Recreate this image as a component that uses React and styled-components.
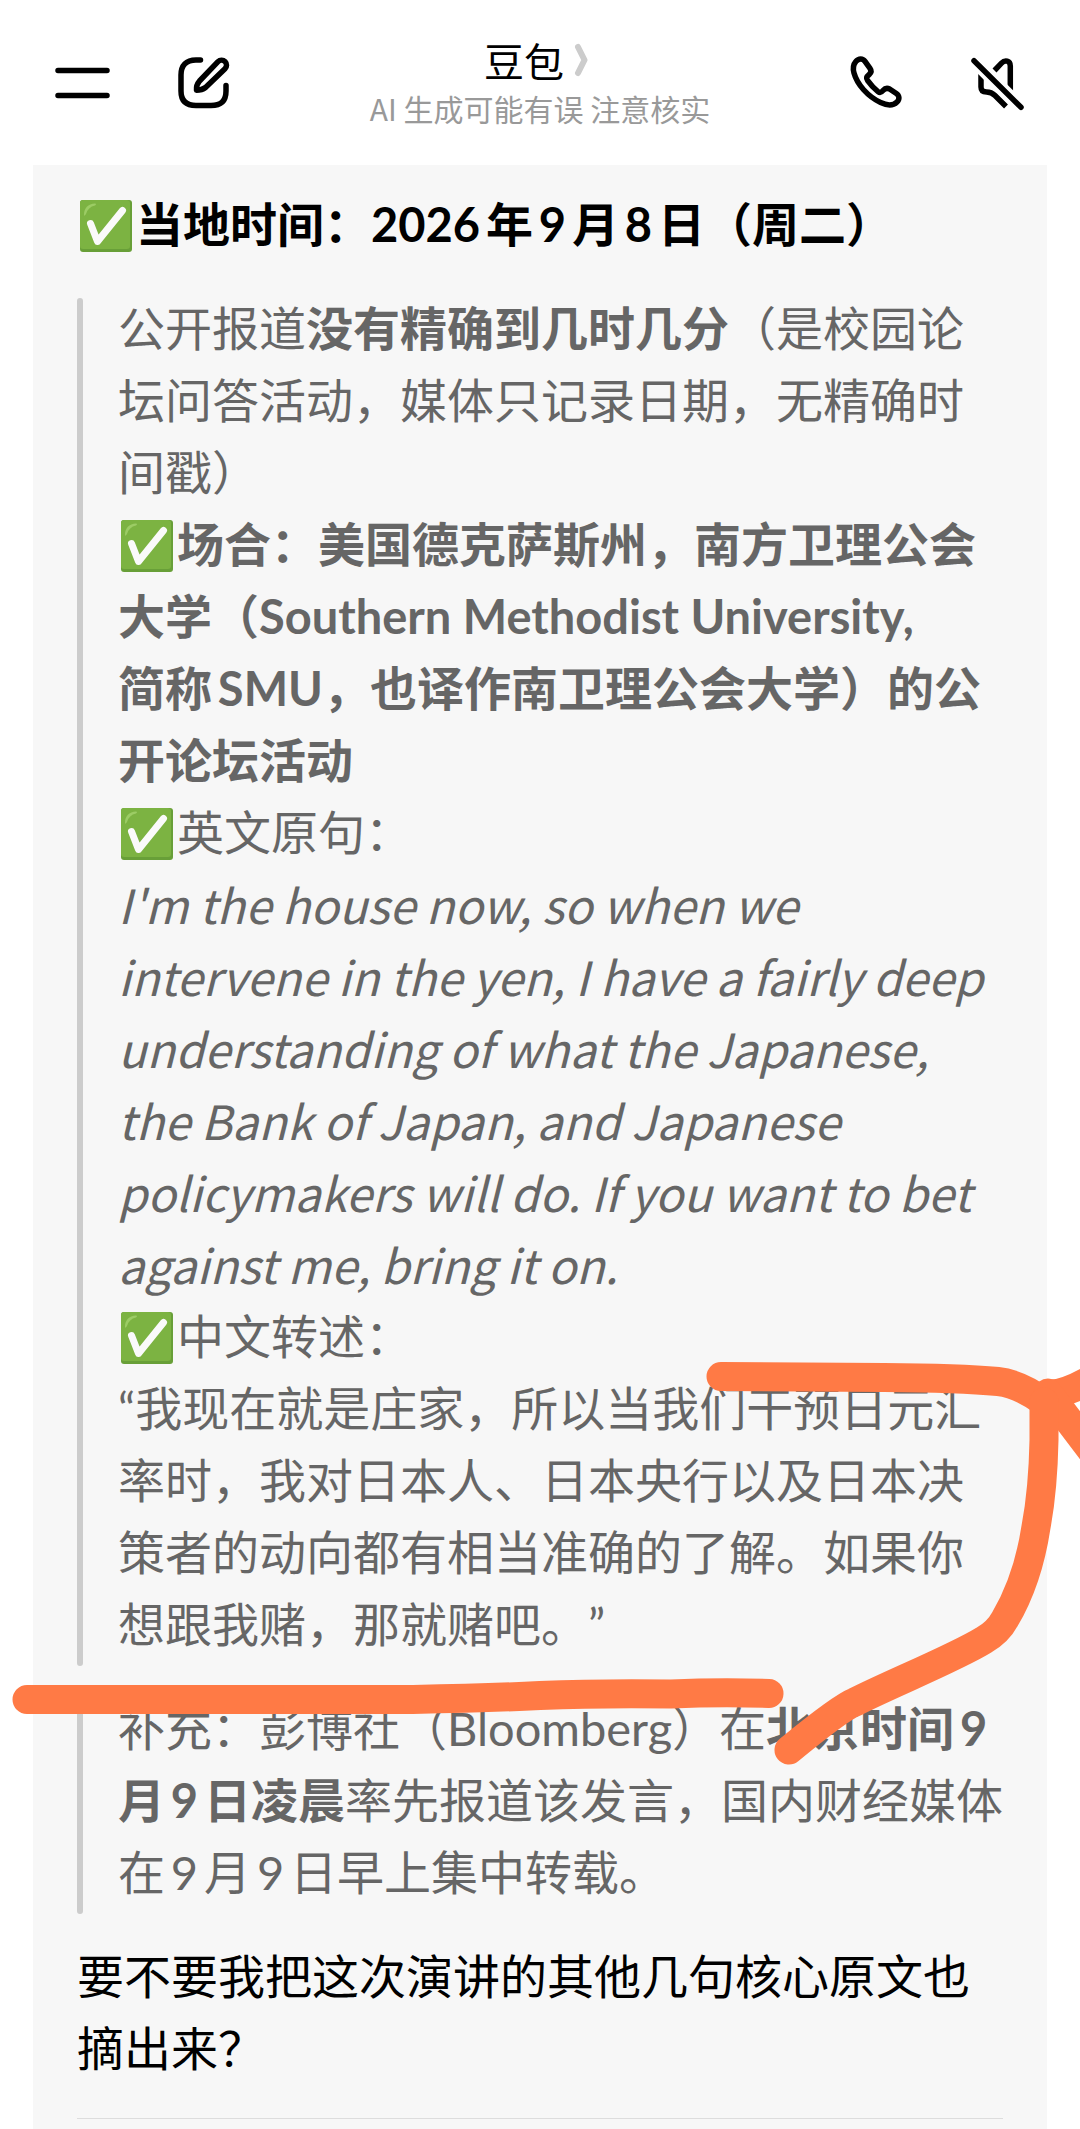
import React from "react";
import styled, { createGlobalStyle } from "styled-components";

const GlobalStyle = createGlobalStyle`
  body {
    margin: 0;
    background: #ffffff;
    color: #000000;
    font-family: "Noto Sans CJK SC", sans-serif;
    text-spacing-trim: space-all;
  }
`;

const Page = styled.div`
  position: relative;
  overflow: hidden;
`;

const Header = styled.header`
  display: flex;
  align-items: center;
  justify-content: space-between;
  min-height: 112px;
  padding: 27px 54px 26px;
`;

const Actions = styled.div`
  display: flex;
  gap: 65px;
`;

const IconButton = styled.button`
  width: 56px;
  height: 56px;
  padding: 0;
  border: none;
  background: transparent;
  color: inherit;
  cursor: pointer;

  svg {
    display: block;
    fill: none;
    stroke: currentColor;
    stroke-width: 5.5;
    stroke-linejoin: round;
  }
`;

const Heading = styled.div`
  display: flex;
  flex-direction: column;
  align-items: center;
  padding-bottom: 6px;
`;

const TitleButton = styled.button`
  display: flex;
  align-items: center;
  gap: 10px;
  padding: 0 8px 0 0;
  border: none;
  background: transparent;
  color: inherit;
  font-family: inherit;
  font-size: 40px;
  line-height: 56px;
  cursor: pointer;
`;

const Subtitle = styled.div`
  color: #999999;
  font-size: 30px;
  line-height: 40px;
`;

const Card = styled.main`
  display: flex;
  flex-direction: column;
  gap: 32px;
  margin: 0 33px;
  padding: 29px 44px 10px;
  background: #f7f7f7;
  font-family: Lato, "Noto Sans CJK SC", sans-serif;
  font-size: 47px;
  line-height: 72px;
  text-autospace: normal;
`;

const Text = styled.div`
  margin: -6px 0 6px;
  font-weight: ${(props) => (props.$bold ? 700 : 400)};

  p {
    margin: 0;
  }
`;

const Original = styled.p`
  font-family: "Noto Sans CJK SC", sans-serif;
  font-style: italic;
`;

const NoWrap = styled.span`
  white-space: nowrap;
`;

const Quote = styled.blockquote`
  display: flex;
  gap: 35px;
  margin: 0;
  color: #666666;

  &::before {
    content: "";
    flex: none;
    width: 6px;
    border-radius: 3px;
    background: #cccccc;
  }
`;

const CheckIcon = styled.svg`
  width: 52px;
  height: 52px;
  margin: 0 4px 0 3px;
  vertical-align: -10px;
`;

const Divider = styled.hr`
  width: 100%;
  height: 1px;
  margin: -4px 0 0;
  border: none;
  background: #dddddd;
`;

const Marker = styled.svg`
  position: absolute;
  top: 0;
  left: 0;
  width: 100%;
  fill: none;
  stroke: #ff7a45;
  stroke-width: 29;
  stroke-linecap: round;
  stroke-linejoin: round;
  pointer-events: none;
`;

const Check = () => (
  <CheckIcon viewBox="0 0 52 52" role="img" aria-label="✅">
    <rect width="52" height="52" rx="3" fill="#689f38" />
    <rect width="50" height="49" rx="3" fill="#7cb342" />
    <path d="M4 15C4 8 8 4 15 3.5Q17 4 15 5.5Q8 7 6 14Q4 17 4 15Z" fill="#9ccc65" />
    <path
      d="M10.5 23.5L17.5 41.5L42.5 10.5"
      fill="none"
      stroke="#fafafa"
      strokeWidth="7"
      strokeLinecap="round"
      strokeLinejoin="round"
    />
  </CheckIcon>
);

const App = () => {
  return (
    <Page>
      <GlobalStyle />
      <Header>
        <Actions>
          <IconButton aria-label="菜单">
            <svg viewBox="0 0 56 56" strokeLinecap="round">
              <path d="M4 15.5H53M4 40.5H53" />
            </svg>
          </IconButton>
          <IconButton aria-label="新对话">
            <svg viewBox="0 0 56 56" strokeLinecap="round">
              <path d="M25.5 5H21C11 5 6 10.5 6 20V36C6 45.5 11 50.5 21 50.5H36C46 50.5 51 46 51 36V30.5" />
              <path d="M43 6.6A5 5 0 0 1 50 13.8L30.5 32.5Q27 35.2 21.5 35.2Q21 30 24.5 26Z" />
            </svg>
          </IconButton>
        </Actions>
        <Heading>
          <TitleButton>
            豆包
            <svg width="14" height="34" viewBox="0 0 14 34" fill="none">
              <path
                d="M4 4L10.5 17L4 30"
                stroke="#cccccc"
                strokeWidth="6"
                strokeLinecap="round"
                strokeLinejoin="round"
              />
            </svg>
          </TitleButton>
          <Subtitle>AI 生成可能有误 注意核实</Subtitle>
        </Heading>
        <Actions>
          <IconButton aria-label="通话">
            <svg viewBox="0 0 56 56">
              <path d="M6.8 6.6C9.8 2.9 13.8 3.2 16 6.4L21 13.4C22.6 15.6 22.3 17.6 20.3 19.4C17.3 22 16.8 23 18.7 25.7C21.7 30 25.3 33.7 29 36.6C31 38.2 32.4 37.5 34 35.6C36 33.2 38.2 32.8 40.6 34L47 38.2C50.6 40.5 50.8 44.3 48 47C44 51 37.6 50.4 31.6 47.6C18.6 41.2 8.2 29.6 5 18C3.8 13.6 4.2 9.6 6.8 6.6Z" />
            </svg>
          </IconButton>
          <IconButton aria-label="静音">
            <svg viewBox="0 0 56 56">
              <path d="M24.5 15.5L31.5 8.2C35 4.4 40.3 5.5 40.3 11V36" />
              <path d="M11 14V32Q11 37 16.5 37Q21.5 37 25 40.5L36 51.5" />
              <path d="M4 5.7L51 52.3" stroke="#ffffff" strokeWidth="13" />
              <path d="M4 5.7L51 52.3" strokeLinecap="round" />
            </svg>
          </IconButton>
        </Actions>
      </Header>

      <Card>
        <Text $bold>
          <p>
            <Check />
            当地时间：2026年9月8日（周二）
          </p>
        </Text>

        <Quote>
          <Text>
            <p>
              公开报道<b>没有精确到几时几分</b>（是校园论坛问答活动，媒体只记录日期，无精确时间戳）
            </p>
            <p>
              <Check />
              <b>
                场合：美国德克萨斯州，南方卫理公会大学（Southern Methodist University, <NoWrap>简称SMU</NoWrap>
                ，也译作南卫理公会大学）的公开论坛活动
              </b>
            </p>
            <p>
              <Check />
              英文原句：
            </p>
            <Original>
              I'm the house now, so when we intervene in the yen, I have a fairly deep understanding of what the
              Japanese, the Bank of Japan, and Japanese policymakers will do. If you want to bet against me, bring it
              on.
            </Original>
            <p>
              <Check />
              中文转述：
            </p>
            <p>
              “我现在就是庄家，所以当我们干预日元汇率时，我对日本人、日本央行以及日本决策者的动向都有相当准确的了解。如果你想跟我赌，那就赌吧。”
            </p>
          </Text>
        </Quote>

        <Quote>
          <Text>
            <p>
              补充：彭博社（Bloomberg）在<b>北京时间9月9日凌晨</b>率先报道该发言，国内财经媒体在9月9日早上集中转载。
            </p>
          </Text>
        </Quote>

        <Text>
          <p>要不要我把这次演讲的其他几句核心原文也摘出来？</p>
        </Text>

        <Divider />
      </Card>

      {/* hand-drawn highlighter strokes */}
      <Marker viewBox="0 0 1080 2129" aria-hidden="true">
        <path d="M721 1376.5L884 1377.5Q960 1378 998 1381.5Q1020 1384 1044 1402" />
        <path d="M1050 1394Q1068 1394 1100 1374" />
        <path d="M1048 1393L1110 1475" />
        <path d="M1044 1402V1440Q1043 1490 1036 1527Q1028 1580 1005 1619Q998 1632 984 1640C955 1658 890 1684 855 1702Q840 1708 789 1750" />
        <path d="M27 1699.5H413Q490 1698 540 1695.5Q600 1693 671 1694Q720 1692 769 1693.5" />
      </Marker>
    </Page>
  );
};

export default App;
